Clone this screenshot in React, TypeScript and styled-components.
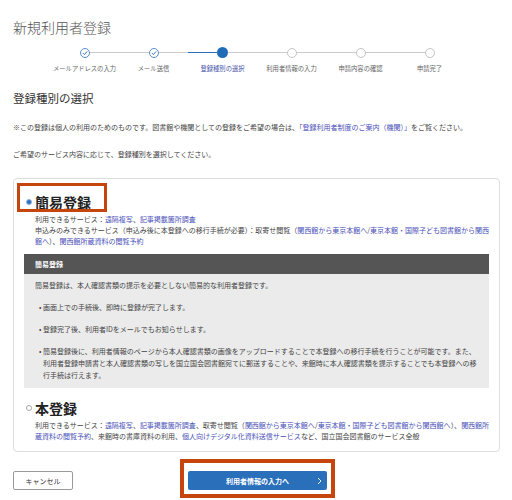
import React from 'react';
import styled, { createGlobalStyle, css } from 'styled-components';

type StepState = 'done' | 'current' | 'todo';

const GlobalStyle = createGlobalStyle`
  html, body {
    margin: 0;
    padding: 0;
    background: #fff;
  }
  body {
    font-family: "Noto Sans CJK JP", "Noto Sans", sans-serif;
    color: #333;
  }
`;

const Page = styled.div`
  width: 512px;
  height: 500px;
  box-sizing: border-box;
  overflow: hidden;
  padding: 17px 12px 0 13px;
`;

const Title = styled.h1`
  margin: 0;
  font-size: 14px;
  line-height: 20px;
  font-weight: 300;
  color: #555;
`;

const Steps = styled.ol`
  list-style: none;
  margin: 10px 0 0 37px;
  padding: 0;
  width: 414px;
  display: flex;
`;

const Step = styled.li`
  flex: 1;
  display: flex;
  flex-direction: column;
  align-items: center;
`;

const Track = styled.div`
  width: 100%;
  height: 11px;
  display: flex;
  align-items: center;
`;

const Half = styled.span<{ $on?: boolean; $hide?: boolean }>`
  flex: 1;
  height: 1px;
  background: ${(p) => (p.$hide ? 'transparent' : p.$on ? '#2a6db5' : '#cccccc')};
`;

const Dot = styled.span<{ $state: StepState }>`
  flex: none;
  box-sizing: border-box;
  border-radius: 50%;
  display: flex;
  align-items: center;
  justify-content: center;
  background: #fff;
  width: 10px;
  height: 10px;
  border: 1px solid #c4c4c4;

  ${(p) =>
    p.$state === 'done' &&
    css`
      border-color: #5a8ecb;
    `}

  ${(p) =>
    p.$state === 'current' &&
    css`
      width: 11px;
      height: 11px;
      border: none;
      background: #1f6bb6;
    `}
`;

const StepLabel = styled.span<{ $active?: boolean }>`
  margin-top: 6px;
  font-size: 6.3px;
  line-height: 9px;
  white-space: nowrap;
  color: ${(p) => (p.$active ? '#4652a8' : '#666')};
`;

const Heading = styled.h2`
  margin: 17px 0 0;
  font-size: 11.5px;
  line-height: 16px;
  font-weight: 400;
  color: #333;
`;

const Note = styled.p`
  margin: 16px 0 0;
  font-size: 7px;
  line-height: 11px;
  color: #444;
  white-space: nowrap;
`;

const Link = styled.a`
  color: #4a50b8;
  text-decoration: none;
`;

const Card = styled.div`
  margin-top: 18px;
  border: 1px solid #dedede;
  border-radius: 4px;
  padding: 13px 4px 9px 10px;
`;

const OptionLabel = styled.label<{ $marked?: boolean; $gap?: number }>`
  display: flex;
  width: fit-content;
  align-items: center;
  margin-top: ${(p) => p.$gap ?? 0}px;
  font-size: 14px;
  line-height: 20px;
  font-weight: 700;
  color: #222;
  position: relative;

  ${(p) =>
    p.$marked &&
    css`
      &::after {
        content: '';
        position: absolute;
        top: -9px;
        left: -7px;
        right: -16px;
        bottom: 0;
        border: 3px solid #c6450d;
        pointer-events: none;
      }
    `}
`;

const Radio = styled.span<{ $checked?: boolean }>`
  width: 6px;
  height: 6px;
  margin: 0 3px 0 2px;
  box-sizing: border-box;
  border-radius: 50%;
  border: 1px solid ${(p) => (p.$checked ? '#8fb3de' : '#aaa')};
  background: ${(p) => (p.$checked ? '#2f6fbf' : '#fff')};
`;

const Desc = styled.div`
  margin-top: 2px;
  padding-left: 11px;
  font-size: 7px;
  line-height: 11px;
  color: #444;
`;

const InfoBox = styled.div`
  margin: 7px 6px 0 0;
`;

const InfoHead = styled.div`
  height: 20px;
  display: flex;
  align-items: center;
  padding-left: 11px;
  background: #555;
  color: #fff;
  font-size: 7px;
  font-weight: 700;
`;

const InfoBody = styled.div`
  background: #ebebeb;
  padding: 5px 11px 7px;
  font-size: 7px;
  line-height: 12px;
  color: #444;

  p {
    margin: 0;
  }
`;

const Bullets = styled.ul`
  list-style: none;
  margin: 10px 0 0;
  padding-left: 8px;

  li {
    text-indent: -4px;
  }

  li::before {
    content: '•';
    display: inline-block;
    width: 4px;
    text-indent: 0;
  }

  li + li {
    margin-top: 10px;
  }
`;

const Actions = styled.div`
  margin-top: 19px;
  display: grid;
  grid-template-columns: 1fr auto 1fr;
  align-items: center;
`;

const CancelButton = styled.button`
  justify-self: start;
  width: 60px;
  height: 19px;
  padding: 0;
  background: #fff;
  border: 1px solid #9a9a9a;
  border-radius: 2px;
  font-family: inherit;
  font-size: 7px;
  color: #333;
`;

const PrimaryButton = styled.button`
  position: relative;
  width: 139px;
  height: 19px;
  padding: 0;
  display: grid;
  grid-template-columns: 16px 1fr 16px;
  align-items: center;
  background: #2a6fba;
  border: none;
  border-radius: 2px;
  font-family: inherit;
  font-size: 7px;
  font-weight: 700;
  color: #fff;
  transform: translateX(1px);

  &::after {
    content: '';
    position: absolute;
    top: -12px;
    left: -8px;
    right: -8px;
    bottom: -8px;
    border: 4px solid #c6450d;
    pointer-events: none;
  }
`;

const ButtonText = styled.span`
  grid-column: 2;
  text-align: center;
`;

const Chevron = styled.svg`
  grid-column: 3;
  justify-self: center;
`;

const steps: { label: string; state: StepState }[] = [
  { label: 'メールアドレスの入力', state: 'done' },
  { label: 'メール送信', state: 'done' },
  { label: '登録種別の選択', state: 'current' },
  { label: '利用者情報の入力', state: 'todo' },
  { label: '申請内容の確認', state: 'todo' },
  { label: '申請完了', state: 'todo' },
];

function Stepper() {
  return (
    <Steps>
      {steps.map((s, i) => (
        <Step key={s.label}>
          <Track>
            <Half $hide={i === 0} $on={s.state === 'current'} />
            <Dot $state={s.state}>
              {s.state === 'done' && (
                <svg width="8" height="8" viewBox="0 0 8 8">
                  <polyline
                    points="2,4.2 3.4,5.6 6,2.6"
                    fill="none"
                    stroke="#2a6db5"
                    strokeWidth="0.9"
                    strokeLinecap="round"
                    strokeLinejoin="round"
                  />
                </svg>
              )}
            </Dot>
            <Half $hide={i === steps.length - 1} />
          </Track>
          <StepLabel $active={s.state === 'current'}>{s.label}</StepLabel>
        </Step>
      ))}
    </Steps>
  );
}

export default function App() {
  return (
    <>
      <GlobalStyle />
      <Page>
        <Title>新規利用者登録</Title>
        <Stepper />

        <Heading>登録種別の選択</Heading>
        <Note>
          ※この登録は個人の利用のためのものです。図書館や機関としての登録をご希望の場合は、
          <Link href="#">「登録利用者制度のご案内（機関）」</Link>をご覧ください。
        </Note>
        <Note>ご希望のサービス内容に応じて、登録種別を選択してください。</Note>

        <Card>
          <OptionLabel $marked>
            <Radio $checked />
            簡易登録
          </OptionLabel>
          <Desc>
            <div>
              利用できるサービス：<Link href="#">遠隔複写</Link>、<Link href="#">記事掲載箇所調査</Link>
            </div>
            <div>
              申込みのみできるサービス（申込み後に本登録への移行手続が必要）：取寄せ閲覧（
              <Link href="#">関西館から東京本館へ</Link>/<Link href="#">東京本館・国際子ども図書館から関西館へ</Link>）、
              <Link href="#">関西館所蔵資料の閲覧予約</Link>
            </div>
          </Desc>

          <InfoBox>
            <InfoHead>簡易登録</InfoHead>
            <InfoBody>
              <p>簡易登録は、本人確認書類の提示を必要としない簡易的な利用者登録です。</p>
              <Bullets>
                <li>画面上での手続後、即時に登録が完了します。</li>
                <li>登録完了後、利用者IDをメールでもお知らせします。</li>
                <li>
                  簡易登録後に、利用者情報のページから本人確認書類の画像をアップロードすることで本登録への移行手続を行うことが可能です。また、利用者登録申請書と本人確認書類の写しを国立国会図書館宛てに郵送することや、来館時に本人確認書類を提示することでも本登録への移行手続は行えます。
                </li>
              </Bullets>
            </InfoBody>
          </InfoBox>

          <OptionLabel $gap={10}>
            <Radio />
            本登録
          </OptionLabel>
          <Desc>
            利用できるサービス：<Link href="#">遠隔複写</Link>、<Link href="#">記事掲載箇所調査</Link>、取寄せ閲覧（
            <Link href="#">関西館から東京本館へ</Link>/<Link href="#">東京本館・国際子ども図書館から関西館へ</Link>）、
            <Link href="#">関西館所蔵資料の閲覧予約</Link>、来館時の書庫資料の利用、
            <Link href="#">個人向けデジタル化資料送信サービス</Link>など、国立国会図書館のサービス全般
          </Desc>
        </Card>

        <Actions>
          <CancelButton type="button">キャンセル</CancelButton>
          <PrimaryButton type="button">
            <ButtonText>利用者情報の入力へ</ButtonText>
            <Chevron width="5" height="8" viewBox="0 0 5 8">
              <polyline points="1,1 4,4 1,7" fill="none" stroke="#fff" strokeWidth="0.9" />
            </Chevron>
          </PrimaryButton>
          <span />
        </Actions>
      </Page>
    </>
  );
}
